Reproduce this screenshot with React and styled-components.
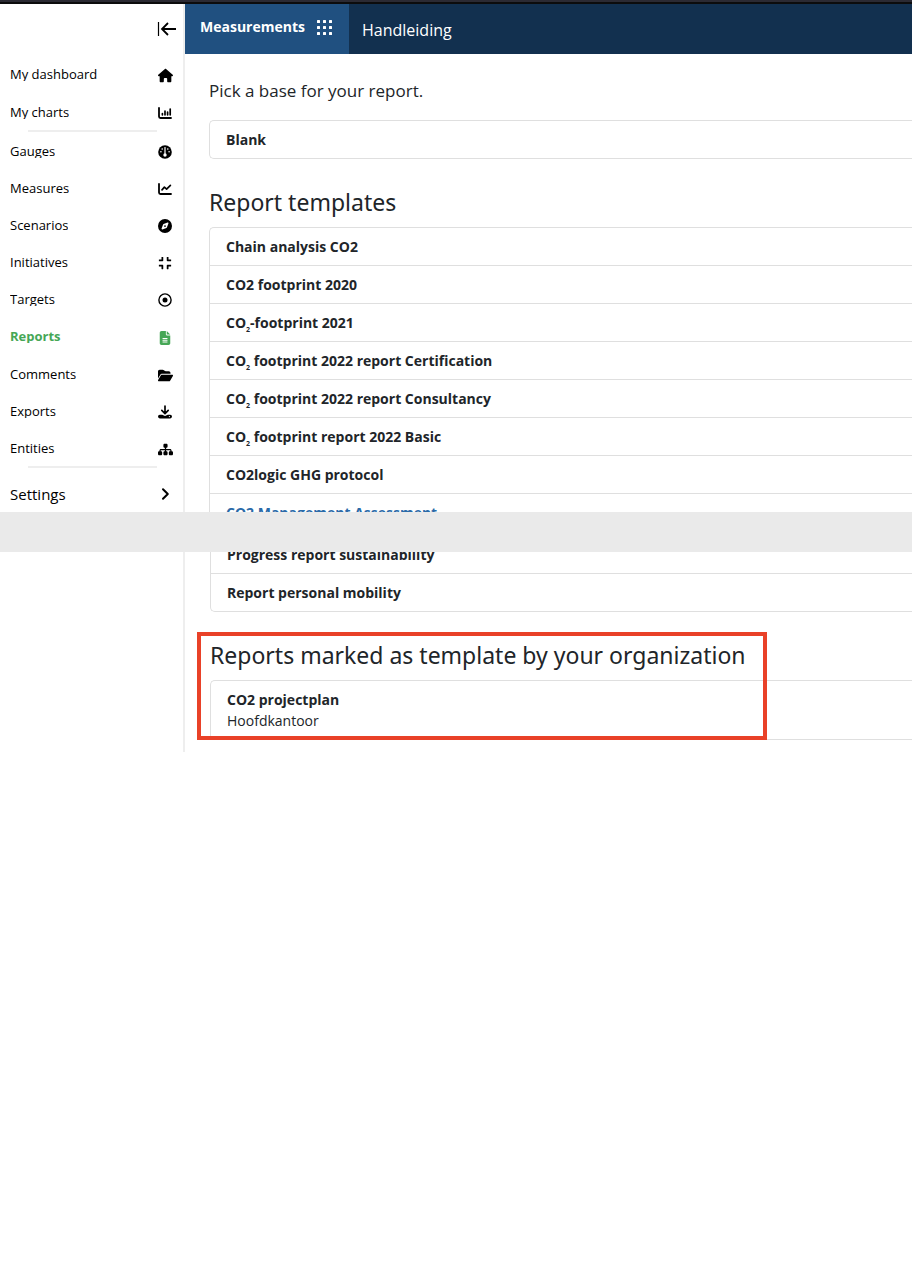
import styled, { createGlobalStyle } from 'styled-components';
import {
    FaHouse,
    FaCompass,
    FaFolderOpen,
    FaSitemap,
    FaFileLines,
} from 'react-icons/fa6';
import { FaCompress } from 'react-icons/fa';

const GlobalStyle = createGlobalStyle`
    * {
        box-sizing: border-box;
    }
    body {
        margin: 0;
        background-color: #fff;
        color: #212529;
        font-family: "Open Sans", "Noto Sans", sans-serif;
    }
`;

const WindowEdge = styled.div`
    height: 4px;
    background-color: #2b2a33;
    border-bottom: 2px solid #0c0c0d;
`;

const Pane = styled.div`
    display: flex;
    min-height: ${({ $minHeight }) => $minHeight || 0}px;
`;

const Sidebar = styled.aside`
    flex: 0 0 185px;
    border-right: 2px solid #eee;
`;

const SidebarTop = styled.div`
    display: flex;
    justify-content: flex-end;
    padding: 16px 6px 17px 0px;
`;

const CollapseButton = styled.button`
    display: flex;
    padding: 0;
    border: 0;
    background: none;
    color: #000;
`;

const NavGroup = styled.nav`
    display: flex;
    flex-direction: column;
    gap: ${({ $gap }) => $gap || 0}px;
`;

const NavLink = styled.a`
    display: flex;
    align-items: center;
    justify-content: space-between;
    height: ${({ $active }) => ($active ? 38 : 37)}px;
    padding: 0px 9px 0px 10px;
    color: ${({ $active }) => ($active ? '#46a756' : '#000')};
    font-size: 13px;
    font-weight: ${({ $active }) => ($active ? 700 : 400)};
    text-decoration: none;
`;

const SettingsLink = styled(NavLink)`
    height: 34px;
    margin-top: 9px;
    font-size: 15px;
`;

const NavLabel = styled.span`
    line-height: 14px;
    overflow: hidden;
`;

const NavIcon = styled.span`
    display: flex;
    justify-content: center;
    width: 18px;
    padding-top: 3px;
`;

const SettingsIcon = styled(NavIcon)`
    padding-top: 0;
`;

const Divider = styled.hr`
    width: 129px;
    height: 2px;
    margin: 0px 0px 0px 28px;
    border: 0;
    background-color: #eee;
`;

const Main = styled.main`
    flex: 1;
    min-width: 0;
`;

const TopBar = styled.header`
    display: flex;
    height: 50px;
    background-color: #12304f;
`;

const ModuleButton = styled.button`
    display: flex;
    align-items: center;
    gap: 12px;
    padding: 0px 16px 4px 15px;
    border: 0;
    background-color: #205080;
    color: #fff;
    font: 700 14px/20px "Open Sans", sans-serif;
`;

const TopLink = styled.a`
    padding: 0px 13px;
    color: #fff;
    font-size: 16px;
    line-height: 52px;
    text-decoration: none;
`;

const Content = styled.div`
    padding-left: ${({ $indent }) => $indent}px;
`;

const Intro = styled.p`
    margin: 0;
    padding: 24px 0px 16px;
    font-size: 17px;
    line-height: 26px;
`;

const Title = styled.h2`
    margin: 0;
    padding: 28px 0px 10px;
    font: 400 23px/30px "Noto Sans", sans-serif;
`;

const List = styled.ul`
    margin: 0;
    padding: 0;
    list-style: none;
    border: 1px solid #dfdfdf;
    border-right: 0;
    border-radius: ${({ $radius }) => $radius || '5px 0 0 5px'};
    border-top-width: ${({ $openTop }) => ($openTop ? 0 : 1)}px;
    border-bottom-width: ${({ $openBottom }) => ($openBottom ? 0 : 1)}px;
`;

const Row = styled.li`
    padding: 8px 16px;
    font-size: 14px;
    line-height: 21px;
    & + & {
        border-top: 1px solid #dfdfdf;
    }
`;

/* rows that run into the band are only partly visible */
const RowCutBottom = styled(Row)`
    height: 19px;
    padding-bottom: 0;
    overflow: hidden;
`;

const RowCutTop = styled(Row)`
    display: flex;
    align-items: flex-end;
    height: 21px;
    padding-top: 0;
    overflow: hidden;
`;

const RowLink = styled.a`
    color: ${({ $hovered }) => ($hovered ? '#2a6aa8' : 'inherit')};
    font-weight: 700;
    text-decoration: none;
    sub {
        font-size: 7px;
        line-height: 0;
    }
`;

const RowNote = styled.div`
    font-size: 14px;
`;

const Band = styled.div`
    height: 40px;
    background-color: #eaeaea;
`;

const Marked = styled.section`
    position: relative;
`;

const MarkedFrame = styled.div`
    position: absolute;
    top: 20px;
    bottom: 0;
    left: -13px;
    width: 570px;
    border: 4px solid #e94128;
    pointer-events: none;
`;

const CollapseIcon = () => (
    <svg width="20" height="18" viewBox="0 0 20 18" fill="none" stroke="currentColor">
        <path d="M1.5 2v14" strokeWidth="1.2" />
        <path d="M19 9H5.5M11 3L5 9l6 6" strokeWidth="1.8" />
    </svg>
);

const GridIcon = () => (
    <svg width="16" height="18" viewBox="0 0 16 18" fill="currentColor">
        {[2, 8, 14].map((y) =>
            [0, 6, 12].map((x) => (
                <rect key={`${x}-${y}`} x={x} y={y} width="3" height="3" rx="0.5" />
            ))
        )}
    </svg>
);

const BarsIcon = () => (
    <svg width="14" height="14" viewBox="0 0 14 14" fill="none" stroke="currentColor" strokeLinecap="round">
        <path d="M1 2v8.5q0 1.5 1.5 1.5H13" strokeWidth="1.8" />
        <path d="M4.4 7.6v1.2M7 5.2v3.6M9.6 6.2v2.6M12.2 3v5.8" strokeWidth="1.7" />
    </svg>
);

const LineIcon = () => (
    <svg width="14" height="14" viewBox="0 0 14 14" fill="none" stroke="currentColor" strokeLinecap="round" strokeLinejoin="round">
        <path d="M1 2v8.5q0 1.5 1.5 1.5H13" strokeWidth="1.8" />
        <path d="M4 7.8l2.4-2.6 2.2 1.9 3.8-3.7" strokeWidth="1.7" />
    </svg>
);

const GaugeIcon = () => (
    <svg width="14" height="14" viewBox="0 0 14 14">
        <circle cx="7" cy="7" r="6.8" fill="currentColor" />
        <g fill="#fff">
            <rect x="6.4" y="2" width="1.2" height="7" rx="0.6" />
            <circle cx="7" cy="10" r="1.7" />
            <circle cx="4.2" cy="4" r="0.8" />
            <circle cx="9.8" cy="4" r="0.8" />
            <circle cx="2.9" cy="6.8" r="0.8" />
            <circle cx="11.1" cy="6.8" r="0.8" />
        </g>
    </svg>
);

const TargetIcon = () => (
    <svg width="14" height="14" viewBox="0 0 14 14">
        <circle cx="7" cy="7" r="6.1" fill="none" stroke="currentColor" strokeWidth="1.4" />
        <circle cx="7" cy="7" r="2.5" fill="currentColor" />
    </svg>
);

const DownloadIcon = () => (
    <svg width="14" height="14" viewBox="0 0 14 14">
        <path d="M7 1v7M3.8 5.4L7 8.6l3.2-3.2" fill="none" stroke="currentColor" strokeWidth="1.7" strokeLinecap="round" strokeLinejoin="round" />
        <path d="M1.8 9.8h2.4L7 11l2.8-1.2h2.4a1.6 1.6 0 0 1 0 3.6H1.8a1.6 1.6 0 0 1 0-3.6z" fill="currentColor" />
        <circle cx="11.4" cy="11.6" r="0.6" fill="#fff" />
    </svg>
);

const ChevronIcon = () => (
    <svg width="14" height="14" viewBox="0 0 14 14" fill="none" stroke="currentColor" strokeWidth="2" strokeLinecap="round" strokeLinejoin="round">
        <path d="M5 2.2L9.8 7 5 11.8" />
    </svg>
);

const personal = [
    { label: 'My dashboard', icon: <FaHouse size={15} /> },
    { label: 'My charts', icon: <BarsIcon /> },
];

const modules = [
    { label: 'Gauges', icon: <GaugeIcon /> },
    { label: 'Measures', icon: <LineIcon /> },
    { label: 'Scenarios', icon: <FaCompass size={14} /> },
    { label: 'Initiatives', icon: <FaCompress size={14} /> },
    { label: 'Targets', icon: <TargetIcon /> },
    { label: 'Reports', icon: <FaFileLines size={14} />, active: true },
    { label: 'Comments', icon: <FaFolderOpen size={15} /> },
    { label: 'Exports', icon: <DownloadIcon /> },
    { label: 'Entities', icon: <FaSitemap size={15} /> },
];

const templates = [
    'Chain analysis CO2',
    'CO2 footprint 2020',
    <>CO<sub>2</sub>-footprint 2021</>,
    <>CO<sub>2</sub> footprint 2022 report Certification</>,
    <>CO<sub>2</sub> footprint 2022 report Consultancy</>,
    <>CO<sub>2</sub> footprint report 2022 Basic</>,
    'CO2logic GHG protocol',
];

const NavItem = ({ label, icon, active }) => (
    <NavLink href="#" $active={active}>
        <NavLabel>{label}</NavLabel>
        <NavIcon>{icon}</NavIcon>
    </NavLink>
);

const App = () => {
    return (
        <>
            <GlobalStyle />
            <WindowEdge />
            <Pane>
                <Sidebar>
                    <SidebarTop>
                        <CollapseButton aria-label="Collapse menu">
                            <CollapseIcon />
                        </CollapseButton>
                    </SidebarTop>
                    <NavGroup $gap={1}>
                        {personal.map((item) => (
                            <NavItem key={item.label} {...item} />
                        ))}
                    </NavGroup>
                    <Divider />
                    <NavGroup>
                        {modules.map((item) => (
                            <NavItem key={item.label} {...item} />
                        ))}
                    </NavGroup>
                    <Divider />
                    <SettingsLink href="#">
                        Settings
                        <SettingsIcon>
                            <ChevronIcon />
                        </SettingsIcon>
                    </SettingsLink>
                </Sidebar>
                <Main>
                    <TopBar>
                        <ModuleButton>
                            Measurements
                            <GridIcon />
                        </ModuleButton>
                        <TopLink href="#">Handleiding</TopLink>
                    </TopBar>
                    <Content $indent={24}>
                        <Intro>Pick a base for your report.</Intro>
                        <List>
                            <Row>
                                <RowLink href="#">Blank</RowLink>
                            </Row>
                        </List>
                        <Title>Report templates</Title>
                        <List $openBottom $radius="5px 0 0 0">
                            {templates.map((name, i) => (
                                <Row key={i}>
                                    <RowLink href="#">{name}</RowLink>
                                </Row>
                            ))}
                            <RowCutBottom>
                                <RowLink href="#" $hovered>
                                    CO2 Management Assessment
                                </RowLink>
                            </RowCutBottom>
                        </List>
                    </Content>
                </Main>
            </Pane>
            <Band />
            <Pane $minHeight={200}>
                <Sidebar />
                <Main>
                    <Content $indent={25}>
                        <List $openTop $radius="0 0 0 5px">
                            <RowCutTop>
                                <RowLink href="#">Progress report sustainability</RowLink>
                            </RowCutTop>
                            <Row>
                                <RowLink href="#">Report personal mobility</RowLink>
                            </Row>
                        </List>
                        <Marked>
                            <Title>Reports marked as template by your organization</Title>
                            <List>
                                <Row>
                                    <RowLink href="#">CO2 projectplan</RowLink>
                                    <RowNote>Hoofdkantoor</RowNote>
                                </Row>
                            </List>
                            <MarkedFrame />
                        </Marked>
                    </Content>
                </Main>
            </Pane>
        </>
    );
};

export default App;
